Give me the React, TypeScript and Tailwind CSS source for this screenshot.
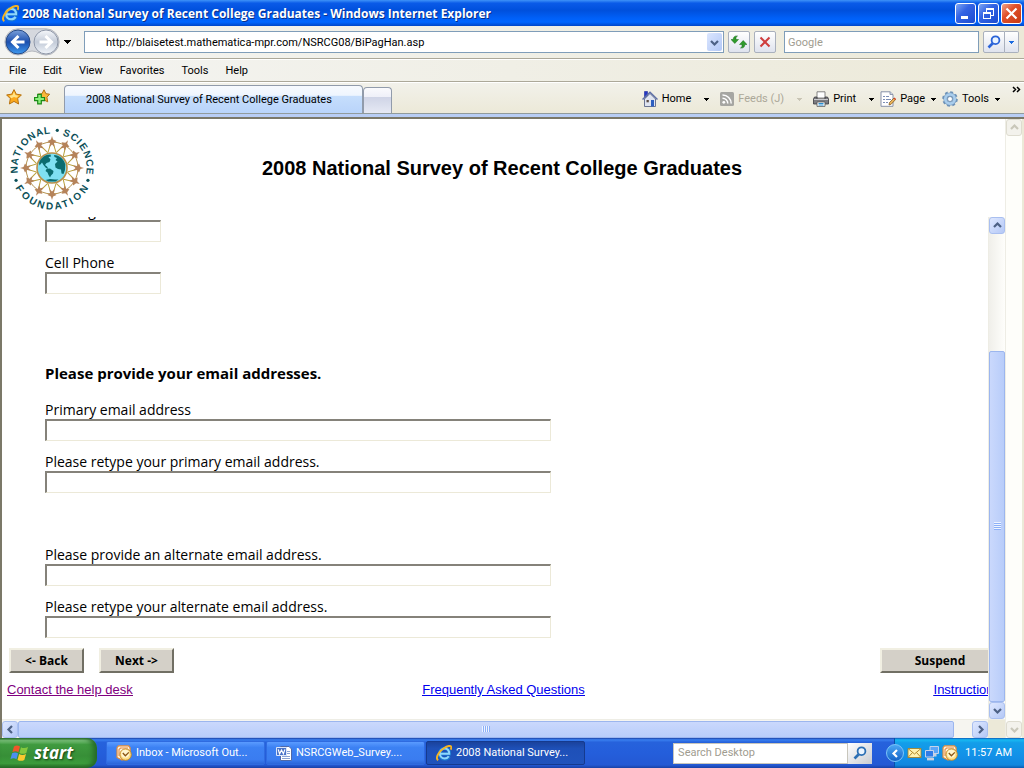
import type { ReactNode } from "react";

const UI_FONT = "font-[Roboto,'Noto_Sans',sans-serif]";
const FORM_FONT = "font-['Open_Sans','Noto_Sans',sans-serif]";
const ARIAL = "font-['Liberation_Sans',Arial,sans-serif]";

const MENUS = ["File", "Edit", "View", "Favorites", "Tools", "Help"];

function Caret({ color = "#000" }: { color?: string }) {
  return (
    <svg width="5" height="3" viewBox="0 0 5 3" className="shrink-0" shapeRendering="crispEdges">
      <path d="M0 0h5v1H4v1H3v1H2V2H1V1H0z" fill={color} />
    </svg>
  );
}

function Chevron({ dir, color = "#4d6185" }: { dir: "up" | "down" | "left" | "right"; color?: string }) {
  const d = {
    up: "M1 6L4.5 2.5L8 6",
    down: "M1 3L4.5 6.5L8 3",
    left: "M6 1L2.5 4.5L6 8",
    right: "M3 1L6.5 4.5L3 8",
  }[dir];
  return (
    <svg width="9" height="9" viewBox="0 0 9 9" className="shrink-0">
      <path d={d} fill="none" stroke={color} strokeWidth="2.2" />
    </svg>
  );
}

function IeLogo({ size = 16 }: { size?: number }) {
  return (
    <svg width={size} height={size} viewBox="0 0 16 16" className="shrink-0">
      <path d="M4.2 8.9H13.4C13.8 5.6 11.6 3.4 8.8 3.4C5.8 3.4 3.7 5.6 3.7 8.8C3.7 12 5.8 13.9 8.6 13.9C10.8 13.9 12.4 12.8 13.1 11.2" fill="none" stroke="#1b78cf" strokeWidth="3.4" />
      <path d="M4.2 8.7H13.2C13.4 5.6 11.4 3.6 8.8 3.6C6 3.6 3.9 5.6 3.9 8.7C3.9 11.6 6 13.4 8.6 13.4C10.5 13.4 12 12.5 12.8 11.2" fill="none" stroke="#8fd6fb" strokeWidth="2" />
      <path d="M2.2 15.2C-1 13.2 2.6 6.6 7.8 3.2C11.4 .8 14.8 .2 15.3 2C15.5 2.8 15.2 3.8 14.6 4.6" fill="none" stroke="#f4b324" strokeWidth="1.9" />
    </svg>
  );
}

function OutlookIcon() {
  return (
    <svg width="16" height="16" viewBox="0 0 16 16" className="shrink-0">
      <path d="M2.5 .8H12.5L14 2.5L14.5 10.5L6 15L1 12.5V2.6z" fill="#fff3d8" stroke="#e08a3c" strokeWidth="1.2" />
      <path d="M3 11V4.600L4.600 3H12" fill="none" stroke="#e58b4b" strokeWidth="1.1" />
      <circle cx="9.6" cy="9.6" r="5.7" fill="#ffdf86" stroke="#c08a2c" />
      <circle cx="9.2" cy="8.8" r="4" fill="#fff6cf" />
      <path d="M6.8 8L9.4 10.8L12.8 7.4" fill="none" stroke="#8a5513" strokeWidth="1.3" />
    </svg>
  );
}

function WordIcon() {
  return (
    <svg width="16" height="16" viewBox="0 0 16 16" className="shrink-0">
      <path d="M4.5 1.5H13L15.5 4V15.5H4.5z" fill="#fff" stroke="#5069a8" />
      <path d="M11 6.5H14M11 8.5H14M6 11.5H14M6 13.5H14" stroke="#8ba3d4" />
      <path d="M.5 2.5H10.5V10.5H.5z" fill="#4a73c8" stroke="#dbe6fb" />
      <path d="M2.2 4.4L3.6 8.8L5.5 5L7.4 8.8L8.9 4.4" fill="none" stroke="#fff" strokeWidth="1.2" />
    </svg>
  );
}

function WindowsFlag() {
  return (
    <svg width="20" height="18" viewBox="0 0 20 18" className="shrink-0">
      <path d="M4 2.5C6 1 8 1.2 10 2.5L8.4 8.3C6.5 7.1 4.5 7 2.4 8.3z" fill="#f0562a" />
      <path d="M11 3.2C13 4.5 15.5 4.4 18 3L16.3 9C14 10.2 11.5 10.1 9.4 8.9z" fill="#84c83e" />
      <path d="M2.1 9.3C4.2 8 6.2 8.2 8.1 9.4L6.5 15.3C4.5 14 2.5 14 .4 15.3z" fill="#4c8ff0" />
      <path d="M9.1 10C11.2 11.2 13.7 11.3 16 10L14.3 15.9C12 17.2 9.6 17.1 7.5 15.9z" fill="#fbc92f" />
    </svg>
  );
}

function StarIcon({ add = false }: { add?: boolean }) {
  return (
    <svg width="16" height="16" viewBox="0 0 16 16" className="shrink-0">
      {add ? (
        <>
          <path d="M10 .8L11.9 4.7L15.6 5.2L12.9 8.2L13.7 12.8L9.8 10.8L6 12.8L6.6 8.2L4 5.2L8 4.7z" fill="#fcb83a" stroke="#b3700f" />
          <path d="M3.7 5.3H7.3V8.5H10.5V11.7H7.3V14.9H3.7V11.7H.6V8.5H3.7z" fill="#8cf07a" stroke="#1c8a17" strokeWidth="1.2" />
        </>
      ) : (
        <>
          <path d="M8 .6L10.3 5.2L15.4 5.9L11.7 9.6L12.6 15L8 12.4L3.4 15L4.3 9.6L.6 5.9L5.7 5.2z" fill="#fba91c" stroke="#b87412" />
          <path d="M8 2.6L9.4 6.1L12.8 6.7L10.3 8.7L8 7.9L5.3 9.2L3.2 6.8L6.6 6.1z" fill="#ffe48a" />
        </>
      )}
    </svg>
  );
}

function HomeIcon() {
  return (
    <svg width="16" height="16" viewBox="0 0 16 16" className="shrink-0">
      <path d="M2.5 .5H5.5V5L2.5 7z" fill="#2436c4" stroke="#1b2a9c" strokeWidth=".6" />
      <path d="M2.5 8L8 2.5L13.5 8V15.5H2.5z" fill="#dfe4f0" stroke="#5b6788" strokeWidth=".9" />
      <path d="M.5 8.5L8 1.2L15.5 8.5" fill="none" stroke="#5e6fa6" strokeWidth="1.5" />
      <path d="M9 9H12V15.5H9z" fill="#2d5fc0" />
      <path d="M4.5 9H6.8V11.3H4.5z" fill="#5b4c44" />
    </svg>
  );
}

function FeedIcon() {
  return (
    <svg width="14" height="14" viewBox="0 0 14 14" className="shrink-0">
      <rect width="14" height="14" rx="1.5" fill="#a6a6a2" />
      <circle cx="3.8" cy="10.3" r="1.4" fill="#fff" />
      <path d="M2.5 6.3A5.2 5.2 0 0 1 7.8 11.6M2.5 2.9A8.6 8.6 0 0 1 11.2 11.6" fill="none" stroke="#fff" strokeWidth="1.5" />
    </svg>
  );
}

function PrinterIcon() {
  return (
    <svg width="16" height="16" viewBox="0 0 16 16" className="shrink-0">
      <path d="M4 .8H12V7H4z" fill="#fff" stroke="#777" strokeWidth=".9" />
      <path d="M1.5 6H4V8H12V6H14.5L15.5 8V13H.5V8z" fill="#7b7b80" stroke="#3b3b40" strokeWidth=".8" />
      <path d="M1 8.5H15" stroke="#c9cacd" />
      <path d="M4 11H12V15.4H4z" fill="#fff" stroke="#555" strokeWidth=".8" />
      <path d="M5.5 12.5H10.5M5.5 14H10.5" stroke="#2c8fd0" />
    </svg>
  );
}

function PageIcon() {
  return (
    <svg width="16" height="16" viewBox="0 0 16 16" className="shrink-0">
      <path d="M1 .8H10L13 3.5V15.3H1z" fill="#fff" stroke="#7c87a0" strokeWidth=".9" />
      <path d="M10 .8V3.5H13" fill="#cfd6e4" stroke="#7c87a0" strokeWidth=".8" />
      <path d="M3 5.5H5M6 5.5H9M3 8.5H5M6 8.5H11M3 11.5H5M6 11.5H8" stroke="#7d8fb6" />
      <path d="M9 14L9.5 11.5L14 7L15.6 8.5L11.2 13.2z" fill="#e9b25a" stroke="#7b5417" strokeWidth=".7" />
      <path d="M13.5 7.5L15.2 9L16 8L14.5 6.5z" fill="#d8402a" />
    </svg>
  );
}

function GearIcon() {
  return (
    <svg width="16" height="16" viewBox="0 0 16 16" className="shrink-0">
      <circle cx="8" cy="8" r="6.8" fill="none" stroke="#6f93b8" strokeWidth="2" strokeDasharray="2.9 2.44" />
      <circle cx="8" cy="8" r="4.6" fill="none" stroke="#6f93b8" strokeWidth="4" />
      <circle cx="8" cy="8" r="4.7" fill="none" stroke="#a9cdec" strokeWidth="2.8" />
      <circle cx="8" cy="8" r="2.5" fill="#fff" stroke="#5a80a8" strokeWidth=".8" />
    </svg>
  );
}

function Magnifier({ size = 14, color = "#2a63d8" }: { size?: number; color?: string }) {
  return (
    <svg width={size} height={size} viewBox="0 0 14 14" className="shrink-0">
      <path d="M6 8L1.5 12.5" stroke={color} strokeWidth="2.6" />
      <circle cx="8.5" cy="5.2" r="3.9" fill="#eaf4ff" stroke={color} strokeWidth="1.8" />
    </svg>
  );
}

const NSF_WORDS = [
  { word: "NATIONAL", angles: [-93, -80, -67, -58, -47, -33, -20, -7], below: false },
  { word: "SCIENCE", angles: [23, 36, 46, 56, 69, 82, 95], below: false },
  { word: "FOUNDATION", angles: [237, 224, 210, 197, 184, 171, 159, 150, 139, 124], below: true },
];
const RING = Array.from({ length: 12 }, (_, i) => i * 30);

function NsfLogo() {
  const rad = (deg: number) => (deg * Math.PI) / 180;
  return (
    <svg width="88" height="88" viewBox="-44 -44 88 88" className="shrink-0" role="img" aria-label="National Science Foundation">
      {NSF_WORDS.map(({ word, angles, below }) => {
        const r = below ? 41.5 : 34.5;
        const flip = below ? -1 : 1;
        const points = angles.map((a, i) => {
          const half = word[i] === "I" ? 1.4 : 3.5;
          const t = rad(a);
          return {
            x: r * Math.sin(t) - flip * half * Math.cos(t),
            y: -r * Math.cos(t) - flip * half * Math.sin(t),
            rot: below ? a - 180 : a,
          };
        });
        return (
          <text
            key={word}
            x={points.map((p) => p.x.toFixed(2)).join(" ")}
            y={points.map((p) => p.y.toFixed(2)).join(" ")}
            rotate={points.map((p) => p.rot).join(" ")}
            fontSize="10"
            fontWeight="bold"
            fill="#0c5058"
            className="font-['Liberation_Sans',Arial,sans-serif]"
          >
            {word}
          </text>
        );
      })}
      {[8, 109, 251].map((a) => (
        <circle key={a} cx={38 * Math.sin(rad(a))} cy={-38 * Math.cos(rad(a))} r="1.6" fill="#0c5058" />
      ))}
      <circle r="26" fill="none" stroke="#b5924f" strokeWidth="1" />
      {RING.map((a) => (
        <g key={a} transform={`rotate(${a})`}>
          <path d="M-4 -15.500L-1.500 -24M4 -15.500L1.500 -24" fill="none" stroke="#b9a03c" strokeWidth="1" />
          <path d="M0 -32L1.100 -28.500L4.500 -27L2 -25L2.500 -21L0 -23.500L-2.500 -21L-2 -25L-4.500 -27L-1.100 -28.500z" fill="#b5835a" />
        </g>
      ))}
      <circle r="15" fill="#7fe0f2" stroke="#b98f4a" strokeWidth="1.600" />
      <path d="M-13 -5C-11 -10.500 -7 -13.500 -1.500 -13.500L-1 -11.500L-3.500 -11L-1.500 -8.500L-2.500 -6L-5.500 -5L-7 -3L-5 -1.500L-3.500 1L-6 0L-8.500 -3L-10 -5.500L-12.500 -2.500z" fill="#0b6c70" />
      <path d="M-5.500 1L-2 .5L1.500 3L1 5.500L-1 7.500L-2 9.500L-3.500 7L-4.500 4.500L-6.500 3z" fill="#0b6c70" />
      <path d="M2 -13C7.500 -12.800 12 -9 13.300 -3.500L13 2L11.500 6L9.500 5.500L9 1.500L6 1L3.500 -.5L3 -4L5.500 -6.500L3.500 -8L5 -10L2.500 -11z" fill="#0b6c70" />
      <path d="M-6.500 12L-2 11L3 11.500L6.500 11.500L3.500 13.500H-3.500z" fill="#0b6c70" />
    </svg>
  );
}

function CaptionButton({ label, close = false, children }: { label: string; close?: boolean; children: ReactNode }) {
  return (
    <button
      type="button"
      aria-label={label}
      className={`flex h-[21px] w-[21px] items-center justify-center rounded-[3px] border border-white ${
        close
          ? "bg-[linear-gradient(135deg,#f0a58c_0%,#e0502a_40%,#c83a12_100%)]"
          : "bg-[linear-gradient(135deg,#7ea6f4_0%,#3464e4_40%,#1b4bd0_100%)]"
      }`}
    >
      {children}
    </button>
  );
}

function TitleBar() {
  return (
    <header className="flex h-[26px] items-center bg-[linear-gradient(180deg,#3f93f8_0%,#0a5be8_12%,#0050dc_40%,#0060f8_70%,#0066ff_85%,#0046c8_100%)] pr-[2px] pl-[2px]">
      <IeLogo size={17} />
      <h1 className="ml-[3px] flex-1 pt-px font-['Open_Sans','Noto_Sans',sans-serif] text-[12px] font-bold whitespace-nowrap text-white [text-shadow:1px_1px_0_#0a2f86]">
        2008 National Survey of Recent College Graduates - Windows Internet Explorer
      </h1>
      <div className="flex gap-[2px]">
        <CaptionButton label="Minimize">
          <svg width="13" height="13" viewBox="0 0 13 13" shapeRendering="crispEdges"><path d="M2 9H9V12H2z" fill="#fff" /></svg>
        </CaptionButton>
        <CaptionButton label="Restore">
          <svg width="13" height="13" viewBox="0 0 13 13" shapeRendering="crispEdges">
            <path d="M4 1H12V9H9V8H11V3H5V5H4zM1 5H9V12H1zM2 7V11H8V7z" fill="#fff" fillRule="evenodd" />
          </svg>
        </CaptionButton>
        <CaptionButton label="Close" close>
          <svg width="13" height="13" viewBox="0 0 13 13"><path d="M1.5 1.5L11.5 11.5M11.5 1.5L1.5 11.5" stroke="#fff" strokeWidth="2.2" /></svg>
        </CaptionButton>
      </div>
    </header>
  );
}

const toolButton = "flex h-[22px] items-center justify-center rounded-[2px] border border-[#a9b0bd] bg-gradient-to-b from-white to-[#dfe3ee]";

function NavigationBar() {
  return (
    <div className="flex h-[33px] items-center border-b border-[#aca899] bg-gradient-to-r from-[#f4f4f2] via-[#f0efe6] to-[#ece9d8] pr-[5px] pl-1">
      <div className="flex items-center">
        <svg width="56" height="28" viewBox="0 0 56 28" className="shrink-0">
          <defs>
            <linearGradient id="back" x1="0" y1="0" x2="0" y2="1">
              <stop offset="0" stopColor="#7ba0da" />
              <stop offset=".5" stopColor="#1c4fae" />
              <stop offset="1" stopColor="#3f9af0" />
            </linearGradient>
            <linearGradient id="fwd" x1="0" y1="0" x2="0" y2="1">
              <stop offset="0" stopColor="#f6f8fb" />
              <stop offset=".5" stopColor="#c3cbd8" />
              <stop offset="1" stopColor="#f0f4fa" />
            </linearGradient>
          </defs>
          <path d="M14 .8H42A13 13 0 0 1 42 27C36 27 34 23 28 23C22 23 20 27 14 27A13 13 0 0 1 14 .8z" fill="#d5d8de" stroke="#b4b7be" />
          <circle cx="14" cy="14" r="12" fill="url(#back)" stroke="#274a86" />
          <circle cx="42" cy="14" r="12" fill="url(#fwd)" stroke="#8e97a8" />
          <path d="M20.5 14H9.5M14.5 8L8.5 14L14.5 20" fill="none" stroke="#fff" strokeWidth="3" />
          <path d="M35.5 14H46.5M41.5 8L47.5 14L41.5 20" fill="none" stroke="#fff" strokeWidth="3" />
        </svg>
        <button type="button" aria-label="Recent pages" className="flex w-6 pl-1">
          <svg width="7" height="4" viewBox="0 0 7 4" shapeRendering="crispEdges"><path d="M0 0h7v1H6v1H5v1H4v1H3V3H2V2H1V1H0z" /></svg>
        </button>
      </div>
      <div className="flex h-[22px] flex-1 items-center border border-[#7f9db9] bg-white pr-px">
        <input
          aria-label="Address"
          defaultValue="http://blaisetest.mathematica-mpr.com/NSRCG08/BiPagHan.asp"
          className="h-full min-w-0 flex-1 pt-px pl-[21px] text-[11px] text-black outline-none"
        />
        <button type="button" aria-label="Show address list" className="flex h-[18px] w-[15px] items-center justify-center rounded-[2px] bg-gradient-to-br from-[#dbe6fe] to-[#b3c8f6]">
          <Chevron dir="down" />
        </button>
      </div>
      <button type="button" aria-label="Refresh" className={`${toolButton} ml-1 w-[22px]`}>
        <svg width="16" height="14" viewBox="0 0 16 14">
          <path d="M6.5 1C4.8 1.6 5 3 5 4.5H7.5L3.8 8.5L0 4.5H2.2C2.2 2 3.8 .6 6.5 1z" fill="#2f9b2b" stroke="#176b17" strokeWidth=".5" />
          <path d="M9.5 13C11.2 12.4 11 11 11 9.5H8.5L12.2 5.5L16 9.5H13.8C13.8 12 12.2 13.4 9.5 13z" fill="#2f9b2b" stroke="#176b17" strokeWidth=".5" />
        </svg>
      </button>
      <button type="button" aria-label="Stop" className={`${toolButton} ml-1 w-[22px]`}>
        <svg width="12" height="12" viewBox="0 0 12 12"><path d="M1.5 1.5L10.5 10.5M10.5 1.5L1.5 10.5" stroke="#cf3d3d" strokeWidth="2" /></svg>
      </button>
      <input
        aria-label="Search"
        placeholder="Google"
        className="ml-2 h-[22px] w-[195px] border border-[#7f9db9] bg-white pt-px pl-[3px] text-[11px] outline-none placeholder:text-[#a09c90]"
      />
      <div className="ml-1 flex">
        <button type="button" aria-label="Run search" className={`${toolButton} w-[22px] rounded-r-none`}><Magnifier /></button>
        <button type="button" aria-label="Search options" className={`${toolButton} w-[14px] rounded-l-none border-l-0`}><Caret color="#1c6be0" /></button>
      </div>
    </div>
  );
}

function MenuBar() {
  return (
    <nav className="flex h-[23px] items-center gap-[17px] border-t border-b border-t-white border-b-[#aca899] bg-gradient-to-r from-[#f4f4f2] via-[#f0efe6] to-[#ece9d8] pt-[2px] pl-[9px] text-[11px]">
      {MENUS.map((menu) => (
        <button key={menu} type="button">{menu}</button>
      ))}
    </nav>
  );
}

function Command({ icon, label, caretGap, disabled = false }: { icon: ReactNode; label: string; caretGap: string; disabled?: boolean }) {
  return (
    <button type="button" disabled={disabled} className={`flex items-center ${disabled ? "text-[#aca899]" : "text-black"}`}>
      {icon}
      <span className={`ml-1 ${caretGap}`}>{label}</span>
      <Caret color={disabled ? "#c9c5b5" : "#000"} />
    </button>
  );
}

function TabBar() {
  return (
    <div className="flex h-[32px] items-end border-t border-b border-t-white border-b-[#919b9c] bg-gradient-to-b from-[#f2f1ea] to-[#ece9d8] pl-[6px] text-[11px]">
      <div className="mb-[8px] flex gap-3">
        <button type="button" aria-label="Favorites Center"><StarIcon /></button>
        <button type="button" aria-label="Add to Favorites"><StarIcon add /></button>
      </div>
      <button
        type="button"
        className="ml-[14px] h-[28px] w-[299px] truncate rounded-t-[4px] border border-b-0 border-[#919bab] bg-[linear-gradient(180deg,#f7fafe_0%,#eef5fe_35%,#c6defc_36%,#b9d4fa_100%)] pt-[2px] pl-[21px] text-left"
      >
        2008 National Survey of Recent College Graduates
      </button>
      <button
        type="button"
        aria-label="New Tab"
        className="h-[26px] w-[29px] rounded-t-[4px] border border-b-0 border-[#919bab] bg-[linear-gradient(180deg,#fafafd_0%,#eff0f8_35%,#cfd4e6_36%,#e6e9f4_100%)]"
      />
      <div className="mb-[4px] ml-auto flex h-5 items-center gap-[11px]">
        <Command icon={<HomeIcon />} label="Home" caretGap="mr-[13px]" />
        <Command icon={<FeedIcon />} label="Feeds (J)" caretGap="mr-[13px]" disabled />
        <div className="flex items-center gap-[6px]">
          <Command icon={<PrinterIcon />} label="Print" caretGap="mr-[13px]" />
          <Command icon={<PageIcon />} label="Page" caretGap="mr-[6px]" />
          <Command icon={<GearIcon />} label="Tools" caretGap="mr-[6px]" />
        </div>
      </div>
      <button type="button" aria-label="More commands" className="mr-[3px] mb-[20px] ml-3">
        <svg width="9" height="7" viewBox="0 0 9 7"><path d="M1 1L3.5 3.5L1 6M5 1L7.5 3.5L5 6" fill="none" stroke="#000" strokeWidth="1.5" /></svg>
      </button>
    </div>
  );
}

function ScrollButton({ dir, disabled = false }: { dir: "up" | "down" | "left" | "right"; disabled?: boolean }) {
  return (
    <button
      type="button"
      aria-label={`Scroll ${dir}`}
      disabled={disabled}
      className={`flex h-[17px] w-[16px] shrink-0 items-center justify-center rounded-[3px] border ${
        disabled ? "border-[#dedcd0] bg-[#f3f2ec]" : "border-[#a9bff0] bg-gradient-to-br from-[#dfe8ff] to-[#b4c8f6]"
      }`}
    >
      <Chevron dir={dir} color={disabled ? "#c9c7ba" : undefined} />
    </button>
  );
}

function Field({ id, label, wide = false, className = "" }: { id: string; label: string; wide?: boolean; className?: string }) {
  return (
    <div className={`flex flex-col ${className}`}>
      <label htmlFor={id} className="h-5 text-[14px] leading-[22px]">{label}</label>
      <input
        id={id}
        type="text"
        className={`h-[22px] border-t-2 border-r border-b border-l-2 border-t-[#85827a] border-r-[#ece9d8] border-b-[#ece9d8] border-l-[#85827a] px-1 text-[13px] outline-none ${
          wide ? "w-[506px]" : "w-[116px]"
        }`}
      />
    </div>
  );
}

function FormButton({ children, wide = false }: { children: ReactNode; wide?: boolean }) {
  return (
    <button
      type="button"
      className={`h-[25px] border-2 border-t-[#f1efe2] border-r-[#716f64] border-b-[#716f64] border-l-[#f1efe2] bg-[#d4d0c8] text-[12px] leading-5 font-bold ${
        wide ? "w-[120px]" : "w-[75px]"
      }`}
    >
      {children}
    </button>
  );
}

function SurveyForm() {
  return (
    <form className={`w-[calc(100%+17px)] ${FORM_FONT}`} onSubmit={(e) => e.preventDefault()}>
      <div className="-mt-[17px] flex flex-col pl-[43px]">
        <Field id="evening-phone" label="Evening Phone" />
        <Field id="cell-phone" label="Cell Phone" className="mt-[10px]" />
        <h3 className="mt-[69px] text-[15px] leading-5 font-bold">Please provide your email addresses.</h3>
        <Field id="primary" label="Primary email address" wide className="mt-4" />
        <Field id="primary-again" label="Please retype your primary email address." wide className="mt-[10px]" />
        <Field id="alternate" label="Please provide an alternate email address." wide className="mt-[51px]" />
        <Field id="alternate-again" label="Please retype your alternate email address." wide className="mt-[10px]" />
      </div>
      <div className="mt-[10px] flex gap-[15px] pr-[5px] pl-[7px]">
        <FormButton>&lt;- Back</FormButton>
        <FormButton>Next -&gt;</FormButton>
        <div className="ml-auto flex">
          <FormButton wide>Suspend</FormButton>
        </div>
      </div>
      <div className={`mt-2 grid grid-cols-3 px-[5px] text-[13px] leading-[17px] underline ${ARIAL}`}>
        <a href="#help" className="text-[#800080]">Contact the help desk</a>
        <a href="#faq" className="justify-self-center text-[#0000ee]">Frequently Asked Questions</a>
        <a href="#instructions" className="justify-self-end text-[#0000ee]">Instructions</a>
      </div>
    </form>
  );
}

function SurveyPage() {
  return (
    <main className="flex flex-1 border-t-2 border-l-2 border-[#7b7868] bg-white">
      <div className="flex min-w-0 flex-1 flex-col">
        <div className="relative flex h-[98px] items-center justify-center pr-[3px]">
          <div className="absolute top-[5px] left-[6px]">
            <NsfLogo />
          </div>
          <h2 className={`text-[20px] font-bold ${ARIAL}`}>2008 National Survey of Recent College Graduates</h2>
        </div>
        <div className="flex flex-1">
          <div className="min-w-0 flex-1 overflow-hidden">
            <SurveyForm />
          </div>
          <div className="flex w-[17px] flex-col border-l border-[#eeede5] bg-gradient-to-r from-[#f0efea] to-[#fefefb]">
            <ScrollButton dir="up" />
            <div className="flex-[117]" />
            <div className="flex w-[16px] flex-[350] items-center justify-center rounded-[2px] border border-[#9cb6ee] bg-gradient-to-r from-[#cad8fc] to-[#b8cdfa]">
              <div className="h-[8px] w-[7px] bg-[repeating-linear-gradient(180deg,#eef4ff_0_1px,#8cb0f8_1px_2px)]" />
            </div>
            <ScrollButton dir="down" />
          </div>
        </div>
        <div className="flex h-[19px] border-t border-[#eeede5]">
          <div className="flex flex-1 items-center bg-[#f6f5f0]">
            <ScrollButton dir="left" />
            <div className="flex h-[17px] flex-[934] items-center justify-center rounded-[2px] border border-[#9cb6ee] bg-gradient-to-b from-[#cad8fc] to-[#b8cdfa]">
              <div className="h-[6px] w-[8px] bg-[repeating-linear-gradient(90deg,#eef4ff_0_1px,#8cb0f8_1px_2px)]" />
            </div>
            <div className="flex-[18]" />
            <ScrollButton dir="right" />
          </div>
          <div className="w-[17px] bg-[#ece9d8]" />
        </div>
      </div>
      <div className="flex w-[19px] flex-col justify-between border-r-2 border-l border-r-[#ece9d8] border-l-[#eeede5] bg-[#fefefa]">
        <ScrollButton dir="up" disabled />
        <ScrollButton dir="down" disabled />
      </div>
    </main>
  );
}

function TaskButton({ icon, label, active = false }: { icon: ReactNode; label: string; active?: boolean }) {
  return (
    <button
      type="button"
      className={`flex h-[24px] w-[159px] items-center gap-[4px] rounded-[2px] border pl-[9px] ${
        active
          ? "border-[#153a8e] bg-[linear-gradient(180deg,#1a429c_0%,#1e50b8_30%,#2053bc_100%)]"
          : "border-[#2f6be0] bg-[linear-gradient(180deg,#5a9bff_0%,#3c81f3_25%,#3a7cf0_80%,#2b66d8_100%)]"
      }`}
    >
      {icon}
      <span className="pt-px whitespace-nowrap">{label}</span>
    </button>
  );
}

function TaskBar() {
  return (
    <footer className="flex h-[30px] items-center bg-[linear-gradient(180deg,#1941a5_0%,#3a80f0_6%,#2662dc_14%,#245edb_50%,#2459d4_90%,#1941a5_100%)] text-[11px] text-white">
      <button
        type="button"
        className="flex h-full w-[97px] items-center gap-[4px] rounded-r-[10px] bg-[linear-gradient(180deg,#2c6a2c_0%,#7cc47c_8%,#3f9a3f_22%,#378f37_60%,#3c9c3c_85%,#256a25_100%)] pl-[10px] shadow-[inset_-4px_0_5px_#266b28]"
      >
        <WindowsFlag />
        <span className="font-['Open_Sans','Noto_Sans',sans-serif] text-[17px] leading-5 font-bold italic [text-shadow:1px_1px_2px_#123f12]">start</span>
      </button>
      <div className="ml-[9px] flex gap-[1px]">
        <TaskButton icon={<OutlookIcon />} label="Inbox - Microsoft Out..." />
        <TaskButton icon={<WordIcon />} label="NSRCGWeb_Survey...." />
        <TaskButton icon={<IeLogo />} label="2008 National Survey..." active />
      </div>
      <div className="ml-auto flex h-[21px]">
        <input
          aria-label="Search Desktop"
          placeholder="Search Desktop"
          className="w-[175px] border border-[#c8c6bc] bg-white pl-1 text-[11px] text-black outline-none placeholder:text-[#a09c90]"
        />
        <button type="button" aria-label="Search" className="flex w-6 items-center justify-center bg-gradient-to-br from-white to-[#c9ccd2]">
          <Magnifier color="#2c6fb4" />
        </button>
      </div>
      <div className="ml-[22px] flex h-full items-center gap-[2px] border-l border-[#0b4fa8] bg-[linear-gradient(180deg,#0c59b9_0%,#18b9f2_6%,#139ee9_16%,#1290e8_60%,#1287de_90%,#0a5bb0_100%)] pr-[12px]">
        <button
          type="button"
          aria-label="Show hidden icons"
          className="-ml-[9px] flex h-[18px] w-[18px] items-center justify-center rounded-full border border-[#7cc4f8] bg-gradient-to-b from-[#4aa6f4] to-[#1464c8]"
        >
          <Chevron dir="left" color="#fff" />
        </button>
        <svg width="15" height="16" viewBox="0 0 15 16" className="ml-px">
          <path d="M1 3.5H14V12.5H1z" fill="#fff2b0" stroke="#a67c1a" strokeWidth=".8" />
          <path d="M1 3.5L7.5 9L14 3.5M1 12.5L5.5 7.5M14 12.5L9.5 7.5" fill="none" stroke="#b58a2b" />
        </svg>
        <svg width="16" height="16" viewBox="0 0 16 16">
          <path d="M6 1.5H14.5V8.5H6z" fill="#5aa6f8" stroke="#c6d4ea" />
          <path d="M10.5 9V11.5" stroke="#c9d0dc" strokeWidth="4" />
          <path d="M1.5 5.5H9.5V12H1.5z" fill="#2f7ce8" stroke="#c6d4ea" />
          <path d="M3 14.2H10" stroke="#c9d0dc" strokeWidth="2.4" />
        </svg>
        <OutlookIcon />
        <time className="ml-[5px] pt-px">11:57 AM</time>
      </div>
    </footer>
  );
}

export default function App() {
  return (
    <div className={`flex min-h-screen flex-col overflow-hidden bg-[#ece9d8] text-black ${UI_FONT}`}>
      <TitleBar />
      <NavigationBar />
      <MenuBar />
      <TabBar />
      <div className="h-[3px] bg-[#b8cdf4]" />
      <SurveyPage />
      <TaskBar />
    </div>
  );
}
